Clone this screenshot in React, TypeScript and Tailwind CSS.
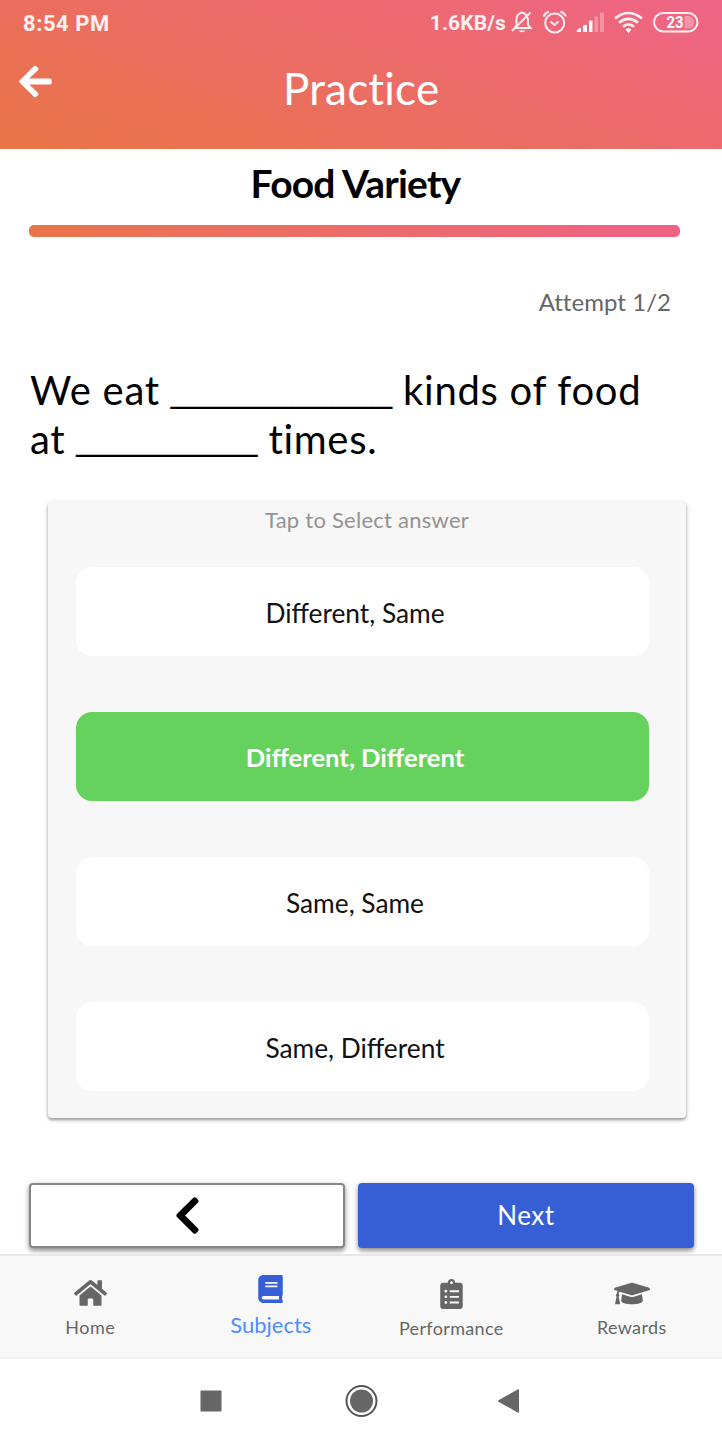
import { useState } from 'react';
import { FaArrowLeft, FaBook, FaChevronLeft, FaClipboardList, FaGraduationCap, FaHome } from 'react-icons/fa';

const options = ['Different, Same', 'Different, Different', 'Same, Same', 'Same, Different'];

// Mute, alarm, signal, wifi and battery
const StatusIcons = () => (
  <svg width="190" height="30" viewBox="510 8 190 30" fill="none" stroke="#fff" strokeOpacity="0.9" strokeWidth="2">
    <path d="M514.500 28H530.500L528 25V19.500Q527 13.500 522 12.500Q517 13.500 516.500 19V25L514.500 28M511.800 31L530.500 12.500" />
    <path d="M518.500 30.500H525.500Q522 34 518.500 30.500Z" fill="#fff" stroke="none" />
    <circle cx="554.700" cy="23" r="9.500" />
    <path d="M550.500 21.500L554.500 25L558.500 21.500M543.500 16.500Q545 13 549 11.800M565.800 16.500Q564.500 13 560.500 11.800" />
    <g fill="#fff" stroke="none">
      <path d="M576.800 32V30L581 27.500V32Z" fillOpacity="0.95" />
      <path d="M583 32V26L586 24.500V32Z" fillOpacity="0.95" />
      <rect x="583.500" y="25" width="3.500" height="7" fillOpacity="0.95" />
      <rect x="589" y="20.500" width="3.500" height="11.500" fillOpacity="0.95" />
      <rect x="594.500" y="16.500" width="3.500" height="15.500" fillOpacity="0.3" />
      <rect x="600" y="12.500" width="4" height="19.500" fillOpacity="0.3" />
    </g>
    <path d="M615 18.500Q628.500 7.500 642 18.500M619 22.700Q628.500 15 638 22.700M623 26.700Q628.500 22 634 26.700" strokeWidth="2.600" />
    <path d="M625.500 29.500Q628.500 27 631.500 29.500L628.500 33Z" fill="#fff" stroke="none" />
    <rect x="654" y="13" width="43.500" height="18.500" rx="9.250" />
    <path d="M684.500 16H689Q694 17 694 22.200Q694 27.500 689 28.500H684.500Z" fill="#fff" fillOpacity="0.3" stroke="none" />
    <text x="666.500" y="28" fill="#fff" stroke="none" fontFamily="Roboto, sans-serif" fontWeight="700" fontSize="16" textLength="17" lengthAdjust="spacingAndGlyphs">23</text>
  </svg>
);

const App = () => {
  const [selected, setSelected] = useState(1);

  return (
    <div className="flex h-[1444px] w-[722px] flex-col overflow-hidden bg-white font-['Lato',sans-serif]">
      <header className="h-[149px] bg-[linear-gradient(18deg,#e97545_0%,#eb6d62_45%,#ef6487_100%)] text-white">
        <div className="flex h-[46px] items-center justify-between pl-[23px] pr-[22px] font-['Roboto',sans-serif] text-[22px] font-bold text-white/90">
          <span className="tracking-[0.550px]">8:54 PM</span>
          <div className="flex items-center gap-1">
            <span className="pt-0.5 text-[21px] tracking-[0.1px]">1.6KB/s</span>
            <StatusIcons />
          </div>
        </div>
        <div className="flex pl-[19px]">
          <button className="mt-[17px] h-[37px]">
            <FaArrowLeft className="h-[37px] w-[33px]" />
          </button>
          <h1 className="ml-[231px] mt-4 text-[44px] leading-[52px] tracking-[0.2px]">Practice</h1>
        </div>
      </header>

      <main className="h-[1105px] shrink-0">
        <h2 className="pr-[11px] pt-[9px] text-center text-[39px] font-bold leading-[50px] tracking-[-0.8px] text-black">Food Variety</h2>
        <div className="ml-[29px] mt-[17px] h-3 w-[651px] rounded-[5px] bg-gradient-to-r from-[#ea7449] to-[#ee6285]" />
        <p className="mt-[50px] pr-[51px] text-right text-[24px] leading-[30px] tracking-[0.050px] text-[#666]">Attempt 1/2</p>

        <div className="ml-[30px] mt-[49px] text-[40px] leading-[49px] tracking-[0.7px] text-black">
          <p className="whitespace-nowrap">
            We eat <span className="align-[3px] font-['Liberation_Sans'] text-[36.200px] leading-none tracking-normal">___________</span> kinds of food
          </p>
          <p className="whitespace-nowrap">
            at <span className="align-[4px] font-['Liberation_Sans'] text-[36.200px] leading-none tracking-normal">_________</span> times.
          </p>
        </div>

        <section className="ml-12 mt-[38px] h-[616px] w-[638px] rounded bg-[#f7f7f7] px-7 shadow-[0_2px_3px_rgba(0,0,0,0.35),0_1px_6px_rgba(0,0,0,0.12)]">
          <p className="pt-[3px] text-center text-[22px] leading-[30px] tracking-[0.250px] text-[#929292]">Tap to Select answer</p>
          <div className="mt-8 flex w-[573px] flex-col gap-14">
            {options.map((option, index) => (
              <button
                key={option}
                onClick={() => setSelected(index)}
                className={`h-[89px] rounded-[16px] pr-[15px] ${
                  selected === index
                    ? 'bg-[#66d25e] pt-[2px] text-[25.600px] font-bold text-white'
                    : 'bg-white pt-1 text-[26.300px] text-[#111]'
                }`}
              >
                {option}
              </button>
            ))}
          </div>
        </section>

        <div className="ml-[29px] mt-[65px] flex gap-[13px]">
          <button className="flex h-[65px] w-[316px] items-center justify-center rounded-[4px] border-2 border-[#868686] bg-white shadow-[0_3px_4px_rgba(0,0,0,0.35),0_1px_7px_rgba(0,0,0,0.15)]">
            <FaChevronLeft className="h-[43px] w-[27px] text-black" />
          </button>
          <button className="h-[65px] w-[336px] rounded-[4px] bg-[#365fd5] text-[26px] tracking-[0.5px] text-white shadow-[0_3px_4px_rgba(0,0,0,0.35),0_1px_7px_rgba(0,0,0,0.15)]">
            Next
          </button>
        </div>
      </main>

      <nav className="relative grid h-[105px] shrink-0 grid-cols-4 border-y-2 border-t-[#e8e8e8] border-b-[#f1f1f1] bg-[#f8f8f8] text-[18px] leading-6 text-[#666]">
        <a className="flex flex-col items-center pt-[22px]">
          <FaHome className="h-[30px] w-[33px]" />
          <span className="mt-[7px] tracking-[0.5px]">Home</span>
        </a>
        <a className="flex flex-col items-center pt-[19px] text-[#365fd5]">
          <FaBook className="h-[28px] w-[25px]" />
          <span className="mt-[10px] text-[22px] tracking-[0px] text-[#4d8dff]">Subjects</span>
        </a>
        <a className="flex flex-col items-center pt-[23px]">
          <FaClipboardList className="h-[30px] w-[23px]" />
          <span className="mt-[7px] tracking-[0.350px]">Performance</span>
        </a>
        <a className="flex flex-col items-center pt-[23px]">
          <FaGraduationCap className="h-[29px] w-[36px]" />
          <span className="mt-[7px] tracking-[0.350px]">Rewards</span>
        </a>
      </nav>

      {/* Android system navigation */}
      <div className="flex h-[84px] shrink-0 items-center pl-[200px]">
        <svg width="320" height="34" viewBox="200 0 320 34" fill="#666">
          <rect x="200.500" y="6.500" width="21" height="21" rx="0.500" />
          <circle cx="361.500" cy="17" r="11.500" />
          <circle cx="361.500" cy="17" r="15" fill="none" stroke="#555" strokeWidth="2" />
          <path d="M498.500 16.200L518 5.300Q519 5 519 6V28Q519 29 518 28.700L498.500 17.800Q497.500 17 498.500 16.200Z" />
        </svg>
      </div>
    </div>
  );
};

export default App;
